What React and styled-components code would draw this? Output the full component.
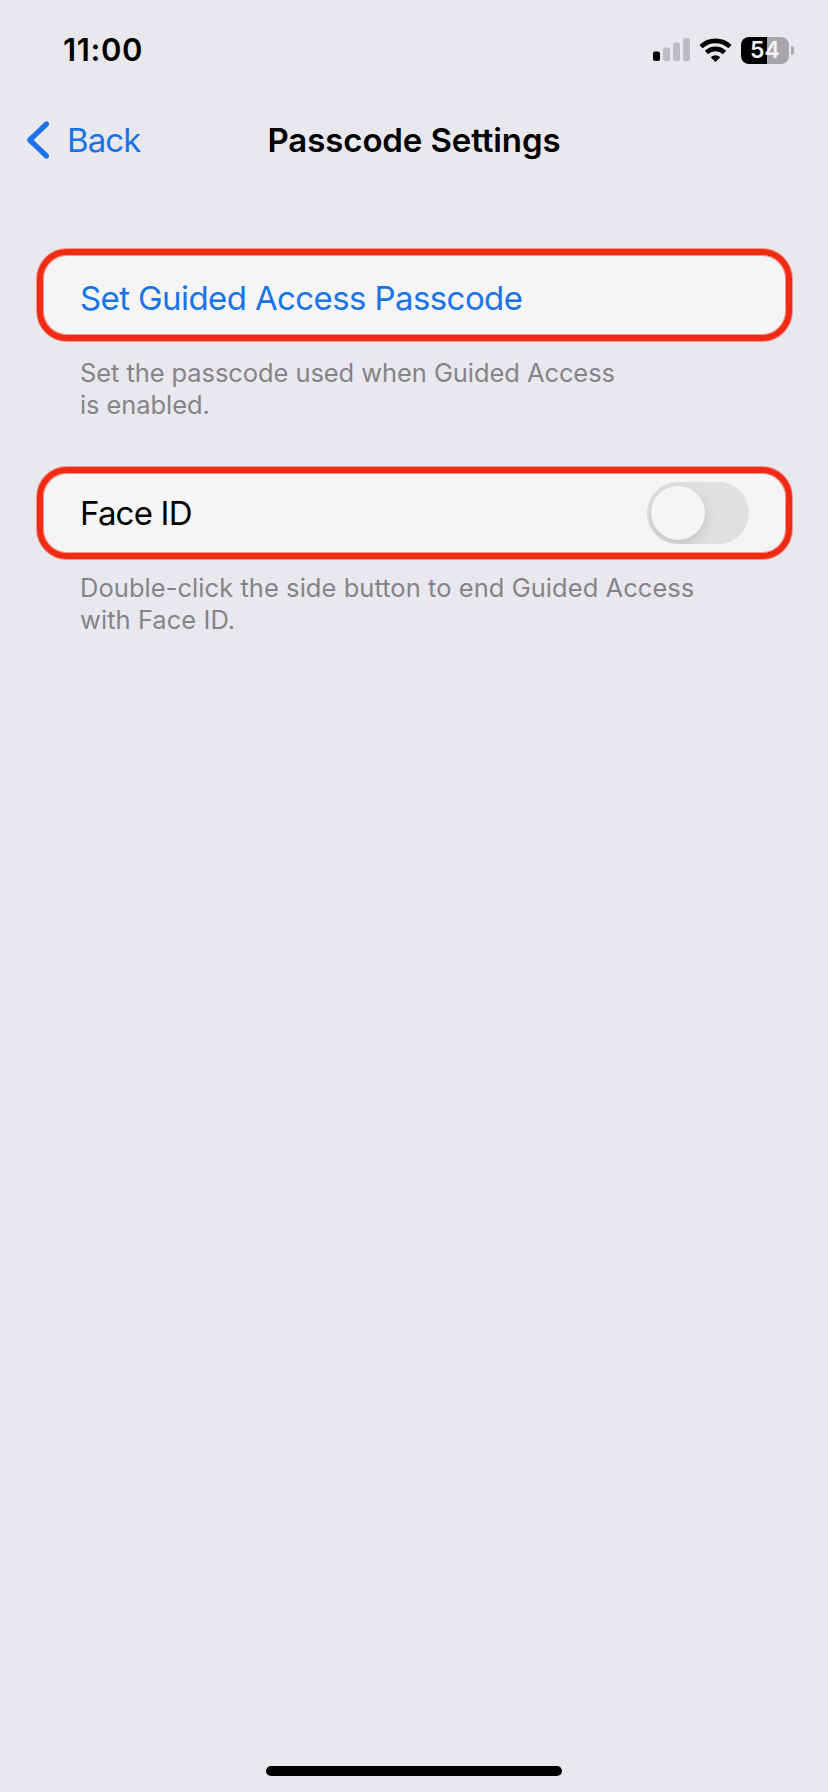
import React from "react";
import styled, { createGlobalStyle } from "styled-components";

const GlobalStyle = createGlobalStyle`
  *, *::before, *::after { box-sizing: border-box; }
  body {
    margin: 0;
    background: #e9e8ee;
    font-family: Inter, "Liberation Sans", sans-serif;
  }
`;

const Screen = styled.div`
  display: flex;
  flex-direction: column;
  width: 828px;
  height: 1792px;
  background: #e9e8ee;
  overflow: hidden;
`;

const StatusBar = styled.header`
  display: flex;
  align-items: center;
  justify-content: space-between;
  height: 100px;
  padding: 0 34px 0 63px;
`;

const Clock = styled.time`
  font-size: 31px;
  font-weight: 600;
  line-height: 40px;
  letter-spacing: ${(p) => p.$tracking};
  color: #000;
`;

const StatusIcons = styled.div`
  display: flex;
  align-items: center;
  gap: 9px;
`;

const Battery = styled.div`
  display: flex;
  align-items: center;
  gap: 2px;
`;

const BatteryBody = styled.div`
  display: flex;
  align-items: center;
  justify-content: center;
  width: 48px;
  height: 27px;
  border-radius: 8px;
  background: linear-gradient(90deg, #000 ${(p) => p.$level}%, #a6a6aa ${(p) => p.$level}%);
  color: #f2f2f5;
  font-size: 23px;
  font-weight: 600;
  line-height: 27px;
`;

const BatteryCap = styled.div`
  width: 3px;
  height: 9px;
  border-radius: 0 4px 4px 0;
  background: #a9a9ad;
`;

const NavBar = styled.nav`
  display: grid;
  grid-template-columns: 1fr auto 1fr;
  align-items: center;
  height: 80px;
  padding: 0 26px;
`;

const BackButton = styled.button`
  display: flex;
  align-items: center;
  gap: 15px;
  padding: 0;
  border: 0;
  background: none;
  color: #1b73e8;
  font: 400 33px/40px Inter, sans-serif;
  letter-spacing: -0.9px;
`;

const Title = styled.h1`
  margin: 0;
  font-size: 33px;
  font-weight: 600;
  line-height: 40px;
  letter-spacing: -0.1px;
  color: #000;
`;

const Content = styled.main`
  display: flex;
  flex-direction: column;
  flex: 1;
  gap: 36px;
  padding: 68px 35px 0 36px;
`;

const Section = styled.section`
  display: flex;
  flex-direction: column;
  height: 182px;
`;

const Row = styled.div`
  display: flex;
  align-items: center;
  justify-content: space-between;
  height: 92px;
  margin: 1px;
  padding: ${(p) => p.$padTop} 37px 0 37px;
  border: 6px solid #ef2b13;
  border-radius: 30px;
  background: #f5f5f5;
  box-shadow: 0 0 0 1px #f4948b, inset 0 0 0 1px #f7968a;
`;

const RowLabel = styled.span`
  font-size: 33px;
  line-height: 40px;
  letter-spacing: ${(p) => p.$tracking};
  color: ${(p) => (p.$link ? "#1b73e8" : "#000")};
`;

const Switch = styled.div`
  display: flex;
  align-items: center;
  width: 102px;
  height: 62px;
  padding: 4px;
  border-radius: 31px;
  background: #e0e0e2;
  overflow: hidden;
`;

const Knob = styled.div`
  width: 54px;
  height: 54px;
  border-radius: 50%;
  background: #f5f5f5;
  box-shadow: 0 5px 14px rgba(0, 0, 0, 0.12), 0 1px 2px rgba(0, 0, 0, 0.05);
`;

const Footnote = styled.p`
  margin: ${(p) => p.$top} 0 0 44px;
  font-size: 25.5px;
  line-height: 32px;
  letter-spacing: ${(p) => p.$tracking};
  color: #85848a;
`;

const HomeArea = styled.footer`
  display: flex;
  justify-content: center;
  height: 26px;
`;

const HomeIndicator = styled.div`
  width: 296px;
  height: 10px;
  border-radius: 5px;
  background: #000;
`;

const SignalIcon = () => (
  <svg width="37" height="24" viewBox="0 0 37 24">
    <rect x="0" y="13.500" width="7" height="9.500" rx="2" fill="#000" />
    <rect x="10" y="9.500" width="7" height="13.500" rx="2" fill="#bdbdc1" />
    <rect x="20" y="4.500" width="7" height="18.500" rx="2" fill="#bdbdc1" />
    <rect x="30" y="0" width="7" height="23" rx="2" fill="#bdbdc1" />
  </svg>
);

const WifiIcon = () => (
  <svg width="33" height="25" viewBox="0 0 33 25">
    <g fill="none" stroke="#000" strokeWidth="4.600">
      <path d="M2 8.700A21 21 0 0 1 31 8.700" />
      <path d="M7.500 14.500A13 13 0 0 1 25.500 14.500" />
    </g>
    <path d="M16.500 24L11.700 19.300Q16.500 15.400 21.300 19.300Z" fill="#000" />
  </svg>
);

const ChevronIcon = () => (
  <svg width="26" height="40" viewBox="0 0 26 40">
    <path d="M20.500 4L3.700 20L20.500 36" fill="none" stroke="#1b73e8" strokeWidth="5.200" strokeLinecap="round" strokeLinejoin="round" />
  </svg>
);

export default function App() {
  return (
    <>
      <GlobalStyle />
      <Screen>
        <StatusBar>
          <Clock $tracking="0.6px">11:00</Clock>
          <StatusIcons>
            <SignalIcon />
            <WifiIcon />
            <Battery>
              <BatteryBody $level={54}>54</BatteryBody>
              <BatteryCap />
            </Battery>
          </StatusIcons>
        </StatusBar>
        <NavBar>
          <BackButton>
            <ChevronIcon />
            Back
          </BackButton>
          <Title>Passcode Settings</Title>
        </NavBar>
        <Content>
          <Section>
            <Row $padTop="5px">
              <RowLabel $link $tracking="-0.6px">Set Guided Access Passcode</RowLabel>
            </Row>
            <Footnote $top="15px" $tracking="-0.08px">
              Set the passcode used when Guided Access
              <br />
              is enabled.
            </Footnote>
          </Section>
          <Section>
            <Row $padTop="0px">
              <RowLabel $tracking="-0.8px">Face ID</RowLabel>
              <Switch role="switch" aria-checked="false" aria-label="Face ID">
                <Knob />
              </Switch>
            </Row>
            <Footnote $top="12px" $tracking="0.05px">
              Double-click the side button to end Guided Access
              <br />
              with Face ID.
            </Footnote>
          </Section>
        </Content>
        <HomeArea>
          <HomeIndicator />
        </HomeArea>
      </Screen>
    </>
  );
}
